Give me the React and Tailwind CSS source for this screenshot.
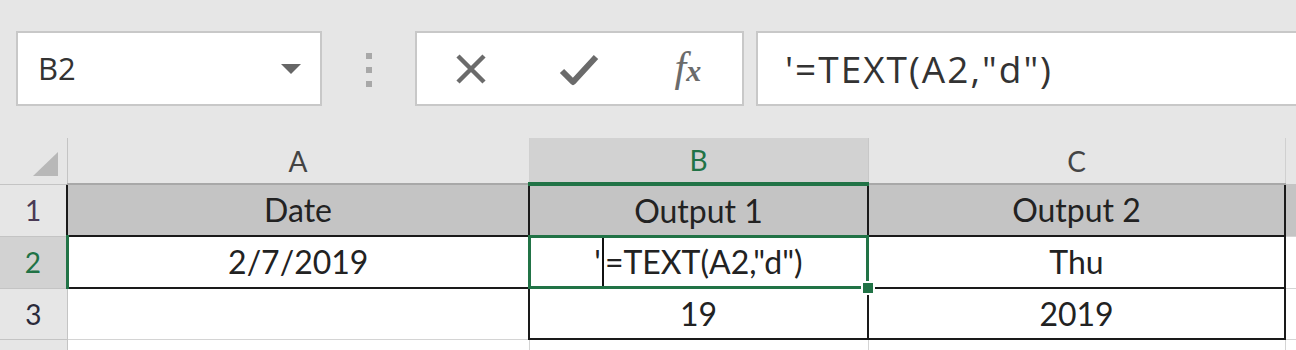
import React from 'react';

function Toolbar() {
  return (
    <div className="flex items-start h-[138px] pt-[31px] pl-[16px]">
      {/* Name box */}
      <div className="w-[306px] h-[75px] shrink-0 bg-white border-2 border-[#c8c8c8] flex items-center justify-between pl-[20px] pr-[18px]">
        <span className="font-['Open_Sans',sans-serif] text-[31px] text-[#333] leading-none">B2</span>
        <svg width="22" height="12" viewBox="0 0 22 12">
          <path d="M1 1 L21 1 L11 11 Z" fill="#666" />
        </svg>
      </div>

      {/* Grip dots */}
      <div className="ml-[44px] w-[6px] shrink-0 mt-[22px] flex flex-col gap-[8px]">
        <div className="w-[6px] h-[6px] bg-[#a8a8a8]" />
        <div className="w-[6px] h-[6px] bg-[#a8a8a8]" />
        <div className="w-[6px] h-[6px] bg-[#a8a8a8]" />
      </div>

      {/* Cancel / enter / insert function */}
      <div className="ml-[43px] w-[329px] h-[75px] shrink-0 bg-white border-2 border-[#c8c8c8] grid grid-cols-3 items-center">
        <div className="flex justify-center">
          <svg width="34" height="32" viewBox="0 0 34 32">
            <path d="M4 3 L30 29 M30 3 L4 29" stroke="#6b6b6b" strokeWidth="4.5" fill="none" />
          </svg>
        </div>
        <div className="flex justify-center">
          <svg width="40" height="34" viewBox="0 0 40 34">
            <path d="M3 19 L14 30 L37 5" stroke="#6b6b6b" strokeWidth="6" fill="none" strokeLinejoin="round" />
          </svg>
        </div>
        <div className="flex justify-center">
          <span className="font-['Liberation_Serif',serif] italic text-[#6b6b6b] leading-none -mt-[4px]">
            <span className="text-[42px]">f</span>
            <span className="text-[30px] font-bold">x</span>
          </span>
        </div>
      </div>

      {/* Formula bar */}
      <div className="ml-[12px] flex-1 h-[75px] bg-white border-y-2 border-l-2 border-[#c8c8c8] flex items-center pl-[27px]">
        <span className="font-['Open_Sans',sans-serif] text-[37px] tracking-[2px] text-[#333] leading-none whitespace-pre">'=TEXT(A2,"d")</span>
      </div>
    </div>
  );
}

const grid = 'border border-[#d4d4d4]';
const dark = 'border-2 border-[#1a1a1a]';
const cellText = "font-['Lato',sans-serif] text-[32px] text-[#222] text-center leading-none p-0";
const headText = "font-['Lato',sans-serif] text-[28px] text-[#444] text-center leading-none p-0";

function Sheet() {
  return (
    <div className="overflow-hidden w-[1296px]">
      <table className="table-fixed border-collapse w-[1485px]">
        <colgroup>
          <col className="w-[67px]" />
          <col className="w-[462px]" />
          <col className="w-[339px]" />
          <col className="w-[417px]" />
          <col className="w-[200px]" />
        </colgroup>
        <tbody>
          {/* column headers */}
          <tr className="h-[46px]">
            <td className="bg-[#e6e6e6] border-r border-b border-[#c4c4c4] p-0 relative">
              <svg className="absolute right-[9px] bottom-[8px]" width="25" height="24" viewBox="0 0 25 24">
                <path d="M25 0 L25 24 L0 24 Z" fill="#b8b8b8" />
              </svg>
            </td>
            <td className={`bg-[#e6e6e6] border-x border-[#d0d0d0] border-b-2 border-b-[#a8a8a8] ${headText}`}>A</td>
            <td className={`bg-[#d2d2d2] border-x border-[#c8c8c8] border-b-4 border-b-[#217346] ${headText} !text-[#217346]`}>B</td>
            <td className={`bg-[#e6e6e6] border-x border-[#d0d0d0] border-b-2 border-b-[#a8a8a8] ${headText}`}>C</td>
            <td className="bg-[#e6e6e6] border-x border-[#d0d0d0] border-b border-b-[#c4c4c4]" />
          </tr>

          {/* row 1 */}
          <tr className="h-[52px]">
            <td className={`bg-[#e6e6e6] border-r border-b border-[#c4c4c4] ${headText} !text-[#4a3a55]`}>1</td>
            <td className={`bg-[#c4c4c4] ${dark} ${cellText}`}>Date</td>
            <td className={`bg-[#c4c4c4] ${dark} ${cellText}`}>Output 1</td>
            <td className={`bg-[#c4c4c4] ${dark} ${cellText}`}>Output 2</td>
            <td className={`bg-[#c4c4c4] ${grid}`} />
          </tr>

          {/* row 2 */}
          <tr className="h-[52px]">
            <td className={`bg-[#d2d2d2] border-b border-[#c4c4c4] border-r-[3px] border-r-[#217346] ${headText} !text-[#217346]`}>2</td>
            <td className={`bg-white ${dark} ${cellText}`}>2/7/2019</td>
            <td className={`bg-white ${dark} ${cellText} relative`}>
              <div className="h-[50px] flex items-stretch justify-center">
                <span className="self-center">'</span>
                <span className="w-[2px] bg-[#111] mx-[1px]" />
                <span className="self-center">=TEXT(A2,"d")</span>
              </div>
              <div className="absolute -inset-[2px] border-[3px] border-[#217346] pointer-events-none" />
              <div className="absolute -right-[8px] -bottom-[8px] w-[14px] h-[14px] bg-[#217346] border-2 border-white" />
            </td>
            <td className={`bg-white ${dark} ${cellText}`}>Thu</td>
            <td className={`bg-white ${grid}`} />
          </tr>

          {/* row 3 */}
          <tr className="h-[51px]">
            <td className={`bg-[#e6e6e6] border-r border-b border-[#c4c4c4] ${headText} !text-[#2a2a3a]`}>3</td>
            <td className={`bg-white ${grid}`} />
            <td className={`bg-white ${dark} ${cellText}`}>19</td>
            <td className={`bg-white ${dark} ${cellText}`}>2019</td>
            <td className={`bg-white ${grid}`} />
          </tr>

          {/* row 4 (cut off) */}
          <tr className="h-[40px]">
            <td className="bg-[#e6e6e6] border-r border-[#c4c4c4]" />
            <td className={`bg-white ${grid}`} />
            <td className={`bg-white ${grid}`} />
            <td className={`bg-white ${grid}`} />
            <td className={`bg-white ${grid}`} />
          </tr>
        </tbody>
      </table>
    </div>
  );
}

export default function App() {
  return (
    <div className="w-[1296px] h-[350px] overflow-hidden bg-[#e6e6e6]">
      <Toolbar />
      <Sheet />
    </div>
  );
}
